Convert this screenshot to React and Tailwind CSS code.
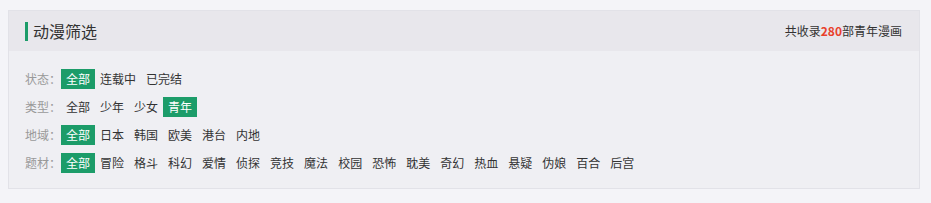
const font = { fontFamily: '"Microsoft YaHei", "Noto Sans CJK SC", "Noto Sans", sans-serif' };

const rows = [
  { label: '状态：', items: ['全部', '连载中', '已完结'], active: 0 },
  { label: '类型：', items: ['全部', '少年', '少女', '青年'], active: 3 },
  { label: '地域：', items: ['全部', '日本', '韩国', '欧美', '港台', '内地'], active: 0 },
  {
    label: '题材：',
    items: ['全部', '冒险', '格斗', '科幻', '爱情', '侦探', '竞技', '魔法', '校园', '恐怖', '耽美', '奇幻', '热血', '悬疑', '伪娘', '百合', '后宫'],
    active: 0,
  },
];

export default function App() {
  return (
    <div className="min-h-[203px] w-[931px] bg-[#f4f4f8] pt-[10px] pl-[8px]" style={font}>
      <div className="w-[912px] border border-[#e2e2e8] bg-[#efeff3]">
        <div className="flex h-[40px] items-center justify-between bg-[#e8e7ec] pl-[16px] pr-[17px]">
          <div className="flex items-center">
            <span className="mr-[5px] block h-[19px] w-[3px] bg-[#1c9c69]" />
            <span className="text-[16px] leading-none text-[#333]">动漫筛选</span>
          </div>
          <div className="text-[12px] text-[#333]">
            共收录<span className="font-bold text-[#e8412c]">280</span>部青年漫画
          </div>
        </div>
        <div className="flex flex-col gap-[8px] pt-[18px] pb-[15px] pl-[16px]">
          {rows.map((row) => (
            <div key={row.label} className="flex h-[20px] items-center text-[12px]">
              <span className="w-[36px] text-[#999]">{row.label}</span>
              {row.items.map((item, i) => (
                <span
                  key={item}
                  className={
                    i === row.active
                      ? 'flex h-[20px] items-center bg-[#1c9c69] px-[5px] text-white'
                      : 'flex h-[20px] items-center px-[5px] text-[#333]'
                  }
                >
                  {item}
                </span>
              ))}
            </div>
          ))}
        </div>
      </div>
    </div>
  );
}
